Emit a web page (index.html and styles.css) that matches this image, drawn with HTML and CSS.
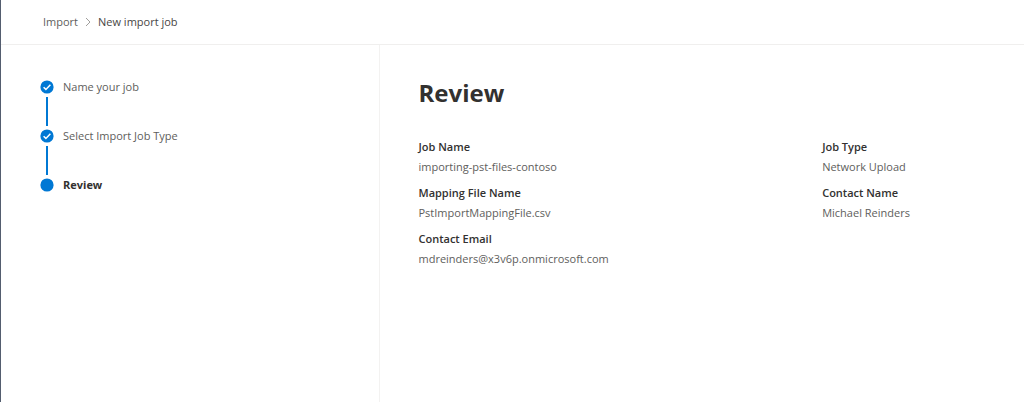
FILE: index.html
```html
<!DOCTYPE html>
<html lang="en">
<head>
<meta charset="utf-8">
<meta name="viewport" content="width=device-width, initial-scale=1">
<title>New import job</title>
<link rel="stylesheet" href="styles.css">
</head>
<body>
<div class="panel">
  <header class="topbar">
    <nav aria-label="Breadcrumb">
      <ol class="breadcrumb">
        <li><a class="crumb" href="#import">Import</a></li>
        <li class="separator" aria-hidden="true"><svg width="6" height="10" viewBox="0 0 6 10"><path d="M1 1l4 4-4 4"/></svg></li>
        <li class="current" aria-current="page">New import job</li>
      </ol>
    </nav>
  </header>
  <div class="body">
    <aside class="sidebar">
      <ol class="steps">
        <li class="step">
          <svg class="dot" viewBox="0 0 14 14" aria-hidden="true"><circle cx="7" cy="7" r="6.6"/><path d="M3.6 7.2l2.3 2.2 4.5-4.6"/></svg>
          <span class="step-name">Name your job</span>
          <span class="line"></span>
        </li>
        <li class="step">
          <svg class="dot" viewBox="0 0 14 14" aria-hidden="true"><circle cx="7" cy="7" r="6.6"/><path d="M3.6 7.2l2.3 2.2 4.5-4.6"/></svg>
          <span class="step-name">Select Import Job Type</span>
          <span class="line"></span>
        </li>
        <li class="step active" aria-current="step">
          <svg class="dot" viewBox="0 0 14 14" aria-hidden="true"><circle cx="7" cy="7" r="6.6"/></svg>
          <span class="step-name">Review</span>
        </li>
      </ol>
    </aside>
    <main class="content">
      <h1 class="title">Review</h1>
      <dl class="fields">
        <div><dt>Job Name</dt><dd>importing-pst-files-contoso</dd></div>
        <div><dt>Job Type</dt><dd>Network Upload</dd></div>
        <div><dt>Mapping File Name</dt><dd>PstImportMappingFile.csv</dd></div>
        <div><dt>Contact Name</dt><dd>Michael Reinders</dd></div>
        <div><dt>Contact Email</dt><dd>mdreinders@x3v6p.onmicrosoft.com</dd></div>
      </dl>
    </main>
  </div>
</div>
</body>
</html>
```
FILE: styles.css
```css
* {
  box-sizing: border-box;
}

body {
  margin: 0;
  background: #fff;
  color: #605e5c;
  font: 11px/20px "Open Sans", "Noto Sans", sans-serif;
}

.panel {
  display: flex;
  flex-direction: column;
  min-height: 100vh;
  border-left: 1px solid #535d6f;
}

.topbar {
  padding: 12px 42px;
  border-bottom: 1px solid #f0efee;
}

.breadcrumb,
.steps {
  margin: 0;
  padding: 0;
  list-style: none;
}

.breadcrumb {
  display: flex;
  align-items: center;
  gap: 7px;
}

.crumb {
  color: inherit;
  text-decoration: none;
}

.separator {
  display: flex;
}

.separator path {
  fill: none;
  stroke: #a19f9d;
}

.current {
  color: #484644;
}

.body {
  display: flex;
  flex: 1;
}

.sidebar {
  flex: 0 0 37%;
  padding: 32px 39px;
  border-right: 1px solid #f3f2f1;
}

.step {
  display: grid;
  grid-template-columns: 14px 1fr;
  column-gap: 9px;
  align-items: center;
}

.dot {
  width: 14px;
  height: 14px;
}

.dot circle {
  fill: #0078d4;
}

.dot path {
  fill: none;
  stroke: #fff;
  stroke-width: 1.5;
}

.line {
  justify-self: center;
  width: 2px;
  height: 29px;
  background: #0078d4;
}

.active .step-name {
  color: #323130;
  font-weight: 700;
}

.content {
  flex: 1;
  padding: 30px 0 30px 39px;
}

.title {
  margin: 0 0 26px;
  color: #323130;
  font-size: 24px;
  line-height: 36px;
  font-weight: 700;
}

.fields {
  display: grid;
  grid-template-columns: 2fr 1fr;
  row-gap: 7px;
  margin: 0;
}

.fields dt {
  color: #323130;
  font-weight: 600;
}

.fields dd {
  margin: 0;
  line-height: 19px;
}
```
